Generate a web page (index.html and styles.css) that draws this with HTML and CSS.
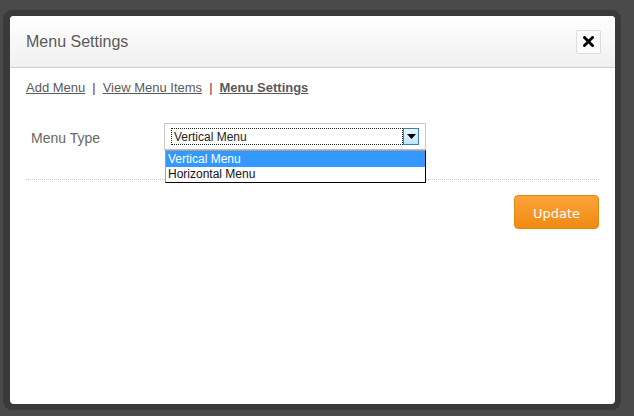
FILE: index.html
```html
<!DOCTYPE html>
<html>
<head>
<meta charset="utf-8">
<link rel="stylesheet" href="styles.css">
</head>
<body>
<div class="frame">
  <div class="panel">
    <div class="header">
      <span class="title">Menu Settings</span>
      <span class="close"><svg width="11" height="11" viewBox="0 0 11 11"><path d="M1.5 1.5 L9.5 9.5 M9.5 1.5 L1.5 9.5" stroke="#000" stroke-width="2.8" stroke-linecap="square"/></svg></span>
    </div>
    <div class="body">
      <div class="nav">
        <a class="link">Add Menu</a><span class="sep">|</span><a class="link">View Menu Items</a><span class="sep">|</span><a class="link bold">Menu Settings</a>
      </div>
      <div class="row">
        <span class="label">Menu Type</span>
        <div class="select">
          <div class="select-inner">
            <span class="value">Vertical Menu</span>
          </div>
          <span class="arrow"><svg width="9" height="5" viewBox="0 0 9 5"><path d="M0 0 H9 L4.5 5 Z" fill="#000"/></svg></span>
          <div class="list">
            <div class="opt active">Vertical Menu</div>
            <div class="opt">Horizontal Menu</div>
          </div>
        </div>
      </div>
      <div class="actions">
        <button class="btn">Update</button>
      </div>
    </div>
  </div>
</div>
</body>
</html>
```

FILE: styles.css
```css
html, body {
  margin: 0;
  padding: 0;
}
body {
  width: 634px;
  height: 416px;
  background: #4a4a4a;
  overflow: hidden;
  font-family: "Liberation Sans", Arial, sans-serif;
}
.frame {
  margin: 10px 0 0 3px;
  width: 618px;
  height: 400px;
  box-sizing: border-box;
  padding: 6px 6px 6px 7px;
  background: #3a3a3a;
  border-radius: 9px;
}
.panel {
  width: 100%;
  height: 100%;
  background: #fff;
  border-radius: 4px;
}
.header {
  height: 52px;
  box-sizing: border-box;
  border-bottom: 1px solid #cfcfcf;
  background: linear-gradient(#ffffff, #f0f0f0);
  border-radius: 4px 4px 0 0;
  display: flex;
  align-items: center;
  justify-content: space-between;
  padding: 0 14px 0 16px;
}
.title {
  font-size: 16px;
  color: #5a5a5a;
}
.close {
  width: 25px;
  height: 24px;
  box-sizing: border-box;
  border: 1px solid #dcdcdc;
  border-radius: 2px;
  background: #fbfbfb;
  display: flex;
  align-items: center;
  justify-content: center;
}
.body {
  padding: 0 16px;
}
.nav {
  padding-top: 12px;
  font-size: 13px;
  line-height: 16px;
  color: #5a5a5a;
}
.link {
  color: #5a5a5a;
  text-decoration: underline;
}
.bold {
  font-weight: bold;
}
.sep {
  color: #6e2246;
  padding: 0 7px 0 7px;
}
.row {
  display: flex;
  align-items: flex-start;
  margin-top: 27px;
  padding-bottom: 29px;
  border-bottom: 1px dotted #c8c8c8;
}
.label {
  width: 133px;
  padding-left: 5px;
  font-size: 14px;
  color: #666;
  margin-top: 7px;
}
.select {
  position: relative;
  width: 262px;
  height: 27px;
  box-sizing: border-box;
  border: 1px solid #c9c9c9;
  border-bottom-color: #bdbdbd;
  background: #fff;
  display: flex;
  align-items: center;
  padding: 0 6px 0 6px;
}
.select-inner {
  flex: 1;
  height: 17px;
  box-sizing: border-box;
  border: 1px dotted #222;
  display: flex;
  align-items: center;
  padding-left: 2px;
}
.value {
  font-size: 12px;
  color: #222;
}
.arrow {
  width: 16px;
  height: 17px;
  box-sizing: border-box;
  border: 1px solid #3c7fb1;
  background: linear-gradient(#eaf6fd, #bee6fd);
  display: flex;
  align-items: center;
  justify-content: center;
}
.list {
  position: absolute;
  left: 0;
  top: 26px;
  width: 261px;
  box-sizing: border-box;
  border: 1px solid #000;
  border-left-color: #a0a0a0;
  border-top-color: #a0a0a0;
  background: #fff;
}
.opt {
  height: 15px;
  line-height: 15px;
  font-size: 12px;
  color: #111;
  padding-left: 2px;
}
.opt.active {
  background: #3399ff;
  color: #fff;
  height: 16px;
  line-height: 16px;
}
.actions {
  display: flex;
  justify-content: flex-end;
  margin-top: 15px;
}
.btn {
  width: 85px;
  height: 34px;
  box-sizing: border-box;
  border: 1px solid #e4890f;
  border-radius: 4px;
  background: linear-gradient(#fba33a, #f08a12);
  color: #fff;
  font-family: "DejaVu Sans", Verdana, sans-serif;
  font-size: 13px;
  padding: 2px 0 0 0;
}
```
